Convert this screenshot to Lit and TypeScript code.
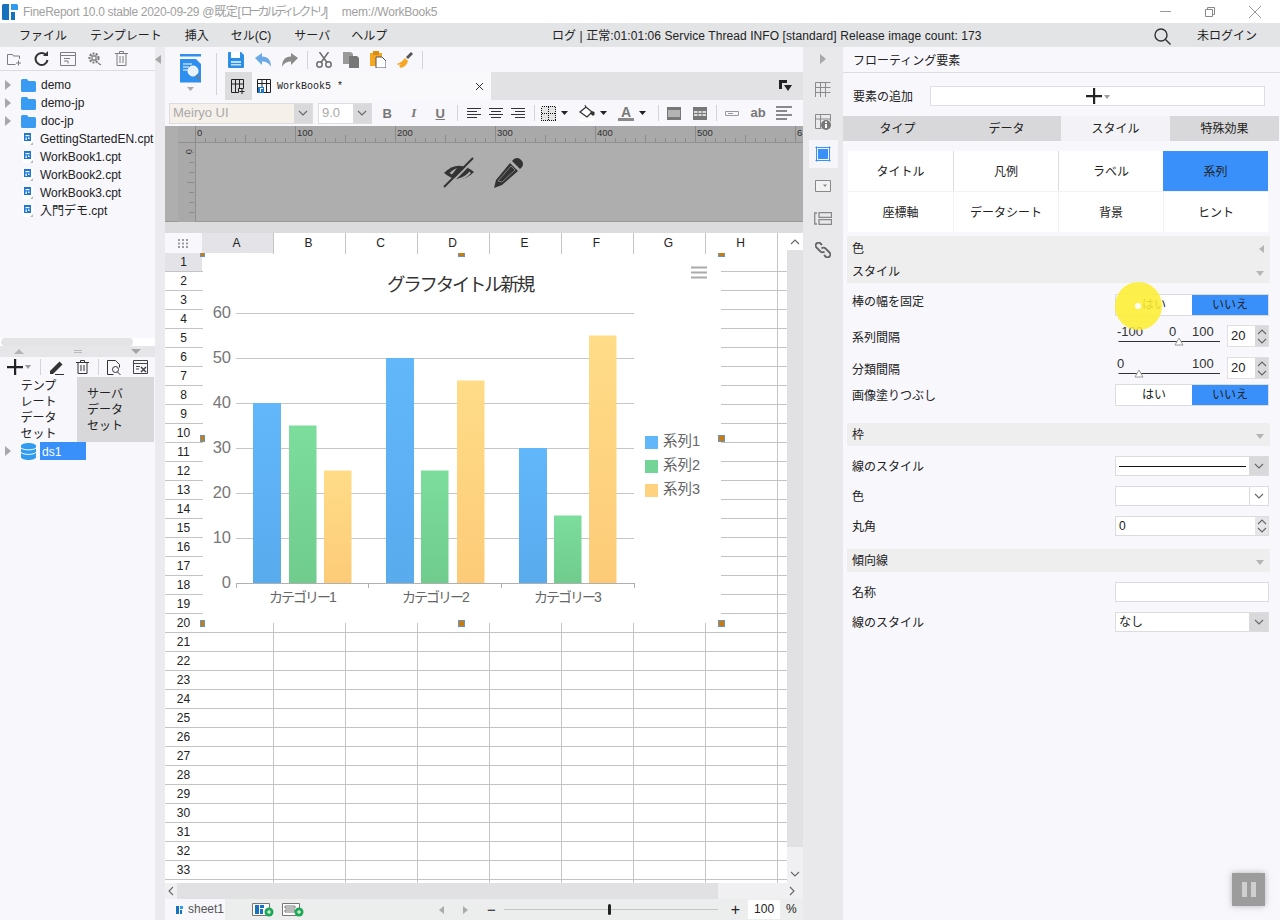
import { LitElement, html, svg, css } from 'lit';
import { customElement } from 'lit/decorators.js';

const caret = html`<svg class="caret" width="7" height="4" viewBox="0 0 7 4"><path d="M0 0h7L3.500 4z" fill="#222"/></svg>`;
const chev = html`<svg width="10" height="6" viewBox="0 0 10 6"><path d="M1 1l4 4 4-4" fill="none" stroke="#666" stroke-width="1.100"/></svg>`;
const chevUp = html`<svg width="10" height="6" viewBox="0 0 10 6"><path d="M1 5l4-4 4 4" fill="none" stroke="#666" stroke-width="1.100"/></svg>`;
const arrowR = html`<svg class="arrow" width="6" height="10" viewBox="0 0 6 10"><path d="M0 0l6 5-6 5z" fill="#a8a8aa"/></svg>`;

const folder = html`<svg width="15" height="13" viewBox="0 0 15 13"><path d="M0 1.500Q0 0 1.500 0H6l1.500 2H13.500Q15 2 15 3.500V11.500Q15 13 13.500 13H1.500Q0 13 0 11.500z" fill="#3a9bf2"/></svg>`;
const fileIcon = html`<svg width="12" height="14" viewBox="0 0 12 14"><path d="M1 1h10v12H1z" fill="#fff"/><path d="M2 1h7v8H2z" fill="#1e78d2"/><path d="M3.500 3h4v1.200h-4zM3.500 5.500h1.300V8H3.500zM6 5.500h1.500V7H6z" fill="#fff"/><path d="M8 13l3-3v3z" fill="#bbb"/></svg>`;
const db = html`<svg width="15" height="17" viewBox="0 0 15 17"><path d="M0 3c0-4 15-4 15 0v11c0 4-15 4-15 0z" fill="#2f9cf0"/><path d="M0 5c3 2.500 12 2.500 15 0M0 9.500c3 2.500 12 2.500 15 0" stroke="#fff" fill="none"/></svg>`;

const stroke = '#7d7d7d';
const treeTools = [
  html`<svg width="16" height="14" viewBox="0 0 16 14" fill="none" stroke="${stroke}"><path d="M.5 2.500h5l1 1.500h6v3M.5 2.500v10h8M11.500 8.500v5M9 11h5"/></svg>`,
  html`<svg width="15" height="15" viewBox="0 0 15 15" fill="none"><path d="M12.500 4.500A6 6 0 1 0 13.500 9" stroke="#333" stroke-width="2"/><path d="M9 5h5V0z" fill="#333"/></svg>`,
  html`<svg width="16" height="14" viewBox="0 0 16 14" fill="none" stroke="${stroke}"><path d="M.5.5h15v13H.5zM.5 3.500h15M4 6.500h6M4 9h4v2.500"/></svg>`,
  html`<svg width="16" height="15" viewBox="0 0 16 15" fill="none" stroke="${stroke}" stroke-width="1.300"><circle cx="7" cy="7" r="4.500" stroke-dasharray="2 1.200" stroke-width="2.200"/><path d="M5 5h4v4H5zM11 12l3 2"/></svg>`,
  html`<svg width="13" height="15" viewBox="0 0 13 15" fill="none" stroke="${stroke}"><path d="M0 2.500h13M4.500 2.500V.5h4v2M2 2.500v12h9v-12M5 5v7M8 5v7"/></svg>`,
];

const dsTools = {
  plus: html`<svg width="16" height="16" viewBox="0 0 16 16"><path d="M0 7h16v2.200H0zM7 0h2.200v16H7z" fill="#222"/></svg>`,
  pen: html`<svg width="15" height="15" viewBox="0 0 15 15"><path d="M1 11L10.500 1.500l3 3L4 14H1z" fill="#333"/><path d="M6 14.500h9" stroke="#333"/></svg>`,
  trash: html`<svg width="13" height="14" viewBox="0 0 13 14" fill="none" stroke="#333"><path d="M0 2.500h13M4.500 2.500V.5h4v2M2 2.500v11h9v-11M5 5v6M8 5v6"/></svg>`,
  search: html`<svg width="14" height="15" viewBox="0 0 14 15" fill="none" stroke="#333"><path d="M.5.5h8l4 4v3M.5.5v14h6"/><circle cx="8.500" cy="9.500" r="3"/><path d="M10.500 12l3 3"/></svg>`,
  edit: html`<svg width="15" height="14" viewBox="0 0 15 14" fill="none" stroke="#444"><path d="M.5.5h14v13H.5zM.5 3.500h14M3 6.500h4M3 9h3"/><path d="M8 12l5-5M8 7l5 5" stroke-width="1.500"/></svg>`,
};

const rowOne = [
  html`<svg width="16" height="16" viewBox="0 0 16 16"><path d="M1 0h12l3 3v12a1 1 0 0 1-1 1H1a1 1 0 0 1-1-1V1a1 1 0 0 1 1-1z" fill="#2e8fe8"/><path d="M3 0h9v6H3z" fill="#fff"/><path d="M3 9h10v2H3zM3 12h10v1.500H3z" fill="#bfe0fb"/></svg>`,
  html`<svg width="16" height="14" viewBox="0 0 16 14"><path d="M0 5l7-5v3.500c6 0 9 4 9 10.500-2-4-5-5.500-9-5.500V12z" fill="#6aa9e6"/></svg>`,
  html`<svg width="16" height="14" viewBox="0 0 16 14"><path d="M16 5L9 0v3.500C3 3.500 0 7.500 0 14c2-4 5-5.500 9-5.500V12z" fill="#8a8a8a"/></svg>`,
  html`<svg width="16" height="16" viewBox="0 0 16 16" fill="none" stroke="#6e6e6e" stroke-width="1.500"><circle cx="3.500" cy="12.500" r="2.700"/><circle cx="12.500" cy="12.500" r="2.700"/><path d="M5 10.500L12.500 0M11 10.500L3.500 0"/></svg>`,
  html`<svg width="16" height="16" viewBox="0 0 16 16"><path d="M0 0h8l2 2v10H0z" fill="#9a9a9a"/><path d="M6 4h8l2 2v10H6z" fill="#777"/></svg>`,
  html`<svg width="16" height="17" viewBox="0 0 16 17"><path d="M0 2h12v13H0z" fill="#f5a623"/><path d="M3 0h6v4H3z" fill="#d98c10"/><path d="M6 6h6l4 4v7H6z" fill="#fff" stroke="#555"/></svg>`,
  html`<svg width="16" height="16" viewBox="0 0 16 16"><path d="M8 6l3 3c-1 4-4 6-7 7-1-1-1-1-2-2l2-2-3 1-1-1c3-1 6-3 8-6z" fill="#f5a623"/><path d="M9 5l5-5 2 2-5 5z" fill="#555"/></svg>`,
];

const gridPlus = html`<svg width="15" height="15" viewBox="0 0 15 15" fill="none" stroke="#222"><path d="M.5.5h12v9h-5v4h-7zM.5 5h12M4.500.5v13M8.500.5v9M11 10v5M8.500 12.500h5"/></svg>`;
const gridDoc = html`<svg width="14" height="14" viewBox="0 0 14 14"><path d="M.5.5h13v13H.5zM.5 4.500h13M5 .5v13M9.500.5v13" fill="none" stroke="#222"/><path d="M1 8h6v6H1z" fill="#1e78d2"/><path d="M3 9h3v1H4v3H3z" fill="#fff"/></svg>`;

const lines = (d: string) => html`<svg width="14" height="12" viewBox="0 0 14 12"><path d="${d}" stroke="#333" fill="none"/></svg>`;

const fmtBorder = html`<svg width="15" height="15" viewBox="0 0 15 15" shape-rendering="crispEdges"><path d="M0 0h15v15H0z" fill="#e4e4e4"/><path d="M.5.5h14v14H.5zM7.500.5v14M.5 7.500h14" fill="none" stroke="#111" stroke-dasharray="1 1"/></svg>`;
const fmtFill = html`<svg width="16" height="16" viewBox="0 0 16 16"><path d="M0 13h15v3H0z" fill="#fff"/><path d="M1 7l6-5 6 5-5 5z" fill="#fff" stroke="#333" stroke-width="1.300"/><path d="M6 0l1 3M12 7l3 0 0 3-2 0z" stroke="#333" fill="#333"/></svg>`;
const fmtColor = html`<span class="font-a">A</span>`;
const cellMerge = html`<svg width="14" height="13" viewBox="0 0 14 13"><path d="M0 0h14v13H0z" fill="#777"/><path d="M1 3h12v7H1z" fill="#b3b3b3"/></svg>`;
const cellSplit = html`<svg width="14" height="13" viewBox="0 0 14 13"><path d="M0 0h14v13H0z" fill="#777"/><path d="M1 4h3.500v2H1zM5.500 4h3v2h-3zM9.500 4H13v2H9.500zM1 7h3.500v2H1zM5.500 7h3v2h-3zM9.500 7H13v2H9.500z" fill="#ddd"/></svg>`;
const fmtInput = html`<svg width="14" height="5" viewBox="0 0 14 5"><path d="M.5.5h13v4H.5zM3 2.500h5" fill="none" stroke="#999"/></svg>`;
const fmtLines = html`<svg width="16" height="14" viewBox="0 0 16 14"><path d="M0 1h16M0 5h11M0 9h16M0 13h11" stroke="#666" stroke-width="1.600" fill="none"/></svg>`;

const sideIcons = [
  html`<svg width="16" height="16" viewBox="0 0 16 16" fill="none" stroke="#8a8a8a"><path d="M.5 15V.5h15M.5 5.500h15M.5 10.500h15M5.500 1v14M10.500 1v14"/></svg>`,
  html`<svg width="16" height="16" viewBox="0 0 16 16"><path d="M.5.500h15v7M.5.500v14h6M.5 5h15M5.500.5v14" fill="none" stroke="#8a8a8a"/><circle cx="11" cy="11" r="5" fill="#777"/><path d="M10 7.500h2v1.500h-2zM10 10h2v4h-2z" fill="#fff"/></svg>`,
  html`<svg width="16" height="16" viewBox="0 0 16 16"><path d="M.5 1.500h15M.5 14.500h15M1.500.5v15M14.500.5v15" stroke="#3a90fb"/><path d="M3 3h10v10H3z" fill="#3a90fb"/></svg>`,
  html`<svg width="16" height="12" viewBox="0 0 16 12"><path d="M.5.500h15v11H.5z" fill="#f2f2f2" stroke="#888"/><path d="M8 4.500h4L10 7z" fill="#888"/></svg>`,
  html`<svg width="18" height="13" viewBox="0 0 18 13" fill="none" stroke="#888" stroke-width="1.300"><path d="M3 1H.7v11H3M5 .7h12.500v4.600H5zM5 7.700h12.500v4.600H5z"/></svg>`,
  html`<svg width="16" height="16" viewBox="0 0 16 16" fill="none" stroke="#666" stroke-width="1.800"><path d="M7 3L5.500 1.500a2.800 2.800 0 0 0-4 4l4 4a2.800 2.800 0 0 0 4 0M9 13l1.500 1.500a2.800 2.800 0 0 0 4-4l-4-4a2.800 2.800 0 0 0-4 0"/></svg>`,
];

const series = [
  { name: '系列1', color: '#62b7fb', shade: '#58abed', swatch: '#62b7fb', values: [40, 50, 30], x: [253, 386, 519] },
  { name: '系列2', color: '#7cdd9d', shade: '#6fcc8d', swatch: '#74d497', values: [35, 25, 15], x: [289, 421, 554] },
  { name: '系列3', color: '#ffdc88', shade: '#fdcb78', swatch: '#ffd27f', values: [25, 45, 55], x: [324, 457, 589] },
];

const yOf = (v: number) => 583 - v * 4.5;

@customElement('app-root')
export class AppRoot extends LitElement {
  static styles = css`
    :host {
      display: block;
      position: relative;
      width: 1280px;
      height: 920px;
      overflow: hidden;
      background: #f7f7fc;
      color: #222;
      font: 12px/1.2 "Liberation Sans", "Noto Sans CJK JP", sans-serif;
    }
    svg { display: block; flex: none; }
    .title {
      height: 23px;
      background: #fff;
      display: flex;
      align-items: center;
      padding-left: 2px;
      color: #a0a0a0;
      white-space: pre;
    }
    .title .txt { margin-left: 5px; padding-top: 2px; letter-spacing: -.3px; }
    .title .kana { letter-spacing: -3.500px; }
    .title .mem { margin-left: 14px; letter-spacing: -.2px; }
    .win { margin-left: auto; display: flex; align-items: center; padding-right: 19px; gap: 34px; }
    .menu {
      height: 24px;
      background: #e3e4e6;
      display: flex;
      align-items: center;
      padding: 2px 0 0 19px;
      box-sizing: border-box;
      gap: 23px;
      color: #222;
      white-space: nowrap;
    }
    .menu > span:nth-child(4) { margin-left: -1px; }
    .menu > span:nth-child(6) { margin-left: -2px; }
    .log { position: absolute; left: 552px; letter-spacing: .08px; }
    .menu .right { margin-left: auto; display: flex; align-items: center; gap: 26px; padding-right: 23px; }
    .main { display: flex; height: 873px; }

    .left { width: 155px; display: flex; flex-direction: column; }
    .tree-tools { height: 23px; display: flex; align-items: center; border-bottom: 1px solid #dcdcdf; }
    .tree-tools div { width: 26.500px; display: flex; justify-content: center; }
    .tree-tools div:first-child { margin-left: 2px; }
    .tree { height: 267px; padding-top: 5px; box-sizing: border-box; }
    .node { height: 18px; display: flex; align-items: center; white-space: nowrap; }
    .arrow { margin-left: 5px; margin-right: 10px; }
    .node .file { margin-left: 22px; margin-right: 6px; }
    .node .fold { margin-right: 5px; }
    .hscroll-small { height: 8px; background: #fff; }
    .hscroll-small div { width: 132px; height: 8px; background: #e4e4e6; border-radius: 4px; margin-left: 1px; }
    .divider { height: 11px; background: #e6e6e8; display: flex; align-items: center; justify-content: space-between; padding: 0 14px; }
    .divider i { width: 8px; height: 3px; border-top: 1px solid #bbb; border-bottom: 1px solid #bbb; box-sizing: border-box; }
    .ds-tools { height: 20px; display: flex; align-items: center; padding-left: 7px; }
    .ds-tools .sep { height: 16px; margin: 0 8px 0 9px; }
    .mini-caret { width: 0; height: 0; border: 3px solid transparent; border-top: 4px solid #999; margin: 3px 0 0 2px; }
    .ds-tools .gap { margin-right: 12px; }
    .sep { width: 1px; height: 20px; background: #d4d4d6; flex: none; }
    .ds-tabs { display: flex; height: 65px; line-height: 16px; }
    .ds-tabs div { width: 77px; box-sizing: border-box; }
    .ds-tabs .on { text-align: center; padding-top: 1px; background: #f7f7fc; }
    .ds-tabs .off { background: #d8d8da; padding: 9px 0 0 10px; }
    .ds1 .name { margin-left: 4px; width: 46px; height: 18px; background: #3a90fb; color: #fff; padding: 1px 0 0 2px; line-height: 18px; box-sizing: border-box; }

    .collapse { width: 10px; background: #ebebef; padding-top: 8px; box-sizing: border-box; }

    .center { width: 638px; display: flex; flex-direction: column; }
    .tools-top { height: 53px; display: flex; }
    .big { width: 51px; flex: none; display: flex; flex-direction: column; align-items: center; padding-top: 7px; box-sizing: border-box; gap: 4px; }
    .big-sep { height: 42px; margin: 6px 8px 0 0; }
    .tools-right { flex: 1; display: flex; flex-direction: column; }
    .row1 { height: 25px; display: flex; align-items: center; }
    .slot { display: flex; align-items: center; justify-content: center; flex: none; }
    .s27 { width: 27px; }
    .s22 { width: 22px; }
    .s26 { width: 26.500px; }
    .s30 { width: 30px; }
    .s32 { width: 32px; }
    .row1 .sep { margin: 0 2.500px 0 3.500px; height: 18px; }
    .row1 .slot:first-child { margin-left: -2.500px; }
    .tabs { height: 28px; background: #e2e2e4; display: flex; align-items: stretch; }
    .tab-new { width: 27px; background: #dcdcde; display: flex; align-items: center; justify-content: center; }
    .tab { width: 239px; background: #f9f9fc; display: flex; align-items: center; padding-left: 5px; box-sizing: border-box; font: 10px "Liberation Mono", monospace; }
    .tab .nm { margin-left: 6px; }
    .tab .x { margin-left: auto; margin-right: 7px; }
    .tabs .end { margin-left: auto; margin-right: 11px; align-self: center; }
    .fmt { height: 26px; display: flex; align-items: center; padding-left: 4px; background: #f7f7fc; }
    .select { display: flex; height: 21px; background: #f5f0ea; border: 1px solid #ddd; box-sizing: border-box; color: #a9a9a9; align-items: center; }
    .select .val { padding-left: 3px; flex: 1; font-size: 13px; }
    .select .dd { width: 18px; align-self: stretch; background: #d9d9db; display: flex; align-items: center; justify-content: center; }
    .font-sel { width: 144px; }
    .size-sel { width: 54px; margin-left: 5px; background: #fff; }
    .ml2 { margin-left: 2px; }
    .ml6 { margin-left: 6.500px; }
    .ml7 { margin-left: 7px; }
    .fmt b, .fmt em, .fmt u { font: bold 13px "Liberation Sans", sans-serif; color: #777; }
    .fmt em { font: italic bold 13px "Liberation Serif", serif; }
    .fmt .sep { height: 16px; }
    .fmt .a { margin: 0 5px 0 3px; }
    .fmt .b { margin: 0 4px 0 5px; }
    .fmt .c { margin-left: 10px; }
    .fmt .d { margin-left: 5px; }
    .caret { margin-left: 5px; }
    .font-a { display: block; width: 16px; text-align: center; font: bold 14px/12px "Liberation Sans", sans-serif; color: #777; border-bottom: 3px solid #888; }
    .ab { font-size: 13px; font-weight: bold; color: #777; }

    .design { height: 96px; position: relative; background: #aeaeae; border-bottom: 1px solid #9a9a9a; box-sizing: border-box; display: flex; gap: 19px; padding: 31px 0 0 278px; }
    .design .rulers { position: absolute; left: 0; top: 0; }
    .design .tool { position: relative; }
    .gap-band { height: 11px; background: #dcdcde; }

    .sheet { height: 650px; display: flex; }
    .grid { width: 622px; height: 650px; position: relative; overflow: hidden; background: #fff; }
    .g-row { display: flex; height: 19px; }
    .g-row.g-head { height: 20px; }
    .corner { width: 37px; background: #f7f7fc; display: flex; align-items: center; justify-content: center; flex: none; }
    .col { width: 72px; flex: none; display: flex; align-items: center; justify-content: center; box-sizing: border-box; border-right: 1px solid #c4c4c4; padding: 1px 2px 0 0; color: #222; background: #fff; }
    .col.on { background: #e4e4e8; }
    .rh { width: 37px; flex: none; box-sizing: border-box; border-bottom: 1px solid #c4c4c4; display: flex; align-items: center; justify-content: center; color: #222; }
    .rh.on { background: #e4e4e8; }
    .cell { width: 72px; flex: none; box-sizing: border-box; border-right: 1px solid #c4c4c4; border-bottom: 1px solid #c4c4c4; }
    .cell.tail { width: 9px; border-right: 0; }
    .chart { position: absolute; left: 38px; top: 21px; background: #fff; }
    .handle { position: absolute; width: 7px; height: 7px; background: #c77d0e; border: 1px solid #6a93c0; box-sizing: border-box; }
    .handle.edge-l { width: 5px; }
    .handle.edge-t { height: 4px; border-top: 0; }
    .vscroll { width: 16px; background: #f0f0f3; display: flex; flex-direction: column; align-items: center; }
    .vscroll .up { width: 16px; height: 17px; background: #fff; display: flex; align-items: center; justify-content: center; }
    .vscroll .thumb { width: 16px; height: 597px; background: #e1e1e3; }
    .vscroll .down { margin-top: 24px; }
    .hbar { height: 16px; display: flex; align-items: center; background: #f0f0f3; }
    .hbar .thumb { width: 541px; height: 16px; background: #e1e1e3; margin: 0 69px 0 0; }
    .hbar .lft { width: 12px; display: flex; justify-content: center; }
    .rot-l { transform: rotate(90deg); }
    .rot-r { transform: rotate(-90deg); }
    .foot { height: 21px; background: #eceded; display: flex; align-items: center; }
    .sheet-tab { width: 60px; height: 21px; background: #f7f7fc; display: flex; align-items: center; padding-left: 11px; box-sizing: border-box; gap: 5px; color: #555; }
    .foot .adds { display: flex; gap: 8px; margin-left: 27px; }
    .nav { margin-left: 135px; display: flex; gap: 19px; }
    .zoom-line { width: 214px; height: 1px; background: #c4c4c4; position: relative; margin-left: 8px; }
    .zoom-thumb { position: absolute; left: 104px; top: -5px; width: 3px; height: 11px; background: #222; border-radius: 2px; }
    .minus { margin-left: 19px; font-size: 15px; line-height: 15px; }
    .plus { margin-left: 13px; font-size: 16px; line-height: 16px; }
    .zoom-val { width: 32px; height: 19px; background: #fff; margin-left: 8px; display: flex; align-items: center; justify-content: center; }
    .pct { margin-left: 6px; }

    .strip { width: 40px; background: #e9e9ec; display: flex; flex-direction: column; align-items: center; padding-top: 7px; box-sizing: border-box; }
    .strip .ic { width: 29px; height: 28px; display: flex; align-items: center; justify-content: center; margin-top: 4px; }
    .strip .ic.on { background: #f6f6fa; }
    .strip .first { margin-bottom: 8px; }

    .panel { width: 437px; display: flex; flex-direction: column; }
    .p-title { height: 26px; border-bottom: 1px solid #dcdcdf; box-sizing: border-box; display: flex; align-items: center; padding: 3px 0 0 10px; }
    .p-add { height: 43px; box-sizing: border-box; padding: 13px 15px 10px 10px; display: flex; align-items: center; }
    .p-add .lb { padding-top: 2px; }
    .p-add .box { margin-left: 17px; flex: 1; height: 20px; background: #fff; border: 1px solid #dfdfe2; box-sizing: border-box; display: flex; align-items: center; justify-content: center; }
    .mc2 { border: 3px solid transparent; border-top: 4px solid #999; margin: 4px 0 0 2px; }
    .p-tabs { height: 25px; display: flex; width: 436px; }
    .p-tabs div { flex: 1; display: flex; align-items: center; justify-content: center; padding-top: 2px; box-sizing: border-box; background: #d8d8da; }
    .p-tabs .on { background: #f3f3f7; }
    .sub { margin: 10px 0 0 5px; width: 420px; display: grid; grid-template-columns: repeat(4, 105px); grid-template-rows: 40px 41px; }
    .sub div { background: #fff; display: flex; align-items: center; justify-content: center; box-sizing: border-box; padding-top: 2px; border-left: 1px solid #ddd; }
    .sub div:nth-child(4n+1) { border-left: 0; }
    .sub div:nth-child(n+5) { border-left-color: #f2f2f2; border-top: 1px solid #f2f2f2; }
    .sub .on { background: #3a90fb; color: #222; border-left: 0; }
    .sec { margin: 0 10px 0 4px; background: #eeeeee; padding: 2px 6px 0 5px; box-sizing: border-box; display: flex; align-items: center; justify-content: space-between; height: 23px; }
    .sec.tall { height: 24px; margin-top: 4px; }
    .down-tri { width: 0; height: 0; border: 4px solid transparent; border-top: 5px solid #b5b5b8; margin-top: 5px; }
    .left-tri { width: 0; height: 0; border: 4px solid transparent; border-right: 5px solid #b5b5b8; border-left: 0; }
    .f-row { display: flex; align-items: center; justify-content: space-between; height: 20px; margin-top: 10px; padding: 0 11px 0 9px; }
    .lb { padding-top: 2px; }
    .h22 { height: 22px; }
    .mt11 { margin-top: 11px; }
    .mt4 { margin-top: 4px; }
    .mt17 { margin-top: 17px; }
    .mt13 { margin-top: 13px; }
    .lift { margin-top: -6px; }
    .toggle { width: 154px; height: 22px; display: flex; border: 1px solid #dcdcdf; box-sizing: border-box; background: #fff; }
    .toggle div { flex: 1; display: flex; align-items: center; justify-content: center; padding-top: 1px; }
    .toggle .yes { background: #3a90fb; }
    .slider-wrap { width: 154px; display: flex; justify-content: space-between; }
    .num { width: 42px; height: 22px; background: #fff; border: 1px solid #e0e0e3; box-sizing: border-box; display: flex; }
    .num .v { flex: 1; padding-left: 3px; display: flex; align-items: center; font-size: 13px; }
    .spin { width: 13px; background: #d9d9db; display: flex; flex-direction: column; align-items: center; justify-content: center; gap: 3px; }
    .spin.wide { gap: 2px; background: #e6e6e8; align-self: stretch; }
    .field { width: 154px; height: 20px; background: #fff; border: 1px solid #dcdcdf; box-sizing: border-box; display: flex; align-items: center; }
    .field .body { flex: 1; padding: 0 3px; display: flex; align-items: center; }
    .stroke-line { flex: 1; height: 1px; background: #111; margin: 0 3px; }
    .dd { width: 19px; align-self: stretch; display: flex; align-items: center; justify-content: center; background: #d9d9db; }
    .dd.plain { background: #fff; border-left: 1px solid #dcdcdf; box-sizing: border-box; }

    .spot { position: absolute; left: 1115px; top: 282px; width: 47px; height: 48px; border-radius: 50%; background: rgba(253, 238, 50, .88); display: flex; align-items: center; justify-content: center; }
    .spot i { width: 6px; height: 6px; background: #fff; border-radius: 50%; margin-right: 2px; }
    .pause { position: absolute; left: 1232px; top: 873px; width: 33px; height: 33px; background: #9c9c9c; box-shadow: 0 0 6px rgba(120,120,120,.5); display: flex; align-items: center; justify-content: center; gap: 4px; }
    .pause i { width: 5px; height: 15px; background: #cfcfcf; }
  `;

  private tree() {
    const folders = ['demo', 'demo-jp', 'doc-jp'];
    const files = ['GettingStartedEN.cpt', 'WorkBook1.cpt', 'WorkBook2.cpt', 'WorkBook3.cpt', '入門デモ.cpt'];
    return html`
      ${folders.map((f) => html`<div class="node">${arrowR}<span class="fold">${folder}</span>${f}</div>`)}
      ${files.map((f) => html`<div class="node"><span class="file">${fileIcon}</span>${f}</div>`)}
    `;
  }

  private rulers() {
    const ticks = [];
    for (let x = 30; x <= 638; x += 10) {
      const major = (x - 30) % 100 === 0;
      const mid = (x - 30) % 50 === 0;
      const h = major ? 17 : mid ? 7 : 4;
      ticks.push(svg`<path d="M${x + 0.5} 16V${16 - h}" stroke="#8b8b8b"/>`);
      if (major) {
        // the 600 label runs off the canvas, only its first digit shows
        const label = x - 30 === 600 ? '6' : `${x - 30}`;
        ticks.push(svg`<text x="${x + 2}" y="10" font-size="9.500" fill="#333" font-family="Liberation Sans">${label}</text>`);
      }
    }
    for (let y = 26; y < 96; y += 10) {
      ticks.push(svg`<path d="M${y % 50 === 6 ? 22 : 24} ${y + 0.500}H29" stroke="#8b8b8b"/>`);
    }
    return html`<svg class="rulers" width="638" height="96" viewBox="0 0 638 96">
      <path d="M13 0h625v17H13z" fill="#a9a9a9"/>
      <path d="M13 17h17v79H13z" fill="#a9a9a9"/>
      <path d="M13 16.500h625M30.500 0v96" stroke="#8f8f8f"/>
      <text x="0" y="0" font-size="9.500" fill="#333" font-family="Liberation Sans" transform="translate(21 23) rotate(90)">0</text>
      ${ticks}
    </svg>`;
  }

  private chart() {
    const levels = [0, 10, 20, 30, 40, 50, 60];
    const cats = [
      ['カテゴリー1', 302],
      ['カテゴリー2', 435],
      ['カテゴリー3', 567],
    ] as const;
    return html`<svg class="chart" width="518" height="369" viewBox="203 254 518 369" font-family="Liberation Sans, Noto Sans CJK JP, sans-serif">
      <defs>
        ${series.map((s, i) => svg`<linearGradient id="g${i}" x1="0" y1="0" x2="0" y2="1"><stop offset="0" stop-color="${s.color}"/><stop offset="1" stop-color="${s.shade}"/></linearGradient>`)}
      </defs>
      <text x="460" y="291" text-anchor="middle" font-size="18.500" letter-spacing="-2.300" fill="#333">グラフタイトル新規</text>
      <path d="M691 267.500h16M691 272.500h16M691 277.500h16" stroke="#aaa" stroke-width="2.200"/>
      ${levels.map((v) => svg`
        <path d="M236 ${yOf(v) + 0.5}H634" stroke="${v === 0 ? '#b0b0b0' : '#c6c6c6'}"/>
        <text x="231" y="${yOf(v) + 5}" text-anchor="end" font-size="16.500" fill="#777">${v}</text>`)}
      <path d="M236.500 583v5M368.500 583v5M501.500 583v5M634.500 583v5" stroke="#b0b0b0"/>
      ${series.map((s, i) => s.values.map((v, c) => svg`<rect x="${s.x[c]}" y="${yOf(v)}" width="${i === 0 ? 28 : 27.500}" height="${v * 4.5}" fill="url(#g${i})"/>`))}
      ${series.map((s, i) => svg`
        <rect x="645" y="${436 + i * 24}" width="13" height="13" fill="${s.swatch}"/>
        <text x="663" y="${446 + i * 24}" font-size="14.500" fill="#666">${s.name}</text>`)}
      ${cats.map(([t, x]) => svg`<text x="${x}" y="602" text-anchor="middle" font-size="14" letter-spacing="-2" fill="#666">${t}</text>`)}
    </svg>`;
  }

  private grid() {
    const cols = ['A', 'B', 'C', 'D', 'E', 'F', 'G', 'H'];
    const rows = Array.from({ length: 34 }, (_, i) => i + 1);
    const handles = [
      { x: 35, y: 20, cls: 'edge-l edge-t' }, { x: 293, y: 20, cls: 'edge-t' }, { x: 553, y: 20, cls: 'edge-t' },
      { x: 35, y: 202, cls: 'edge-l' }, { x: 553, y: 202, cls: '' },
      { x: 35, y: 387, cls: 'edge-l' }, { x: 293, y: 387, cls: '' }, { x: 553, y: 387, cls: '' },
    ];
    return html`<div class="grid">
      <div class="g-row g-head">
        <div class="corner"><svg width="11" height="9" viewBox="0 0 11 9"><path d="M0 0h2v2H0zM4 0h2v2H4zM8 0h2v2H8zM0 3.500h2v2H0zM4 3.500h2v2H4zM8 3.500h2v2H8zM0 7h2v2H0zM4 7h2v2H4zM8 7h2v2H8z" fill="#9c9c9c"/></svg></div>
        ${cols.map((c, i) => html`<div class="col ${i === 0 ? 'on' : ''}">${c}</div>`)}
      </div>
      ${rows.map((r) => html`<div class="g-row">
        <div class="rh ${r === 1 ? 'on' : ''}">${r < 34 ? r : ''}</div>
        ${cols.map(() => html`<div class="cell"></div>`)}
        <div class="cell tail"></div>
      </div>`)}
      ${this.chart()}
      ${handles.map((h) => html`<div class="handle ${h.cls}" style="left:${h.x}px;top:${h.y}px"></div>`)}
    </div>`;
  }

  private toggle() {
    return html`<div class="toggle"><div>はい</div><div class="yes">いいえ</div></div>`;
  }

  private num(v: string) {
    return html`<div class="num"><div class="v">${v}</div><div class="spin">${chevUp}${chev}</div></div>`;
  }

  private slider(labels: [string, number][], thumb: number) {
    return html`<svg width="106" height="24" viewBox="0 0 106 24" font-family="Liberation Sans" font-size="13" fill="#333">
      ${labels.map(([t, x]) => svg`<text x="${x}" y="11">${t}</text>`)}
      <path d="M3.500 16.500H105" stroke="#333"/>
      <path d="M${thumb} 13l4 7h-8z" fill="#fff" stroke="#999"/>
    </svg>`;
  }

  render() {
    return html`
      <div class="title">
        <svg width="16" height="16" viewBox="0 0 16 16"><path d="M0 1.500Q0 0 1.500 0H7v16H1.500Q0 16 0 14.500z" fill="#1572bd"/><path d="M9 0h5.500Q16 0 16 1.500V6H9z" fill="#2f9bef"/><path d="M9 8h4v8H9z" fill="#1572bd"/></svg>
        <div class="txt">FineReport 10.0 stable 2020-09-29 @既定[<span class="kana">ローカルディレクトリ</span>]<span class="mem">mem://WorkBook5</span></div>
        <div class="win">
          <svg width="11" height="1" viewBox="0 0 11 1"><path d="M0 .5h11" stroke="#999"/></svg>
          <svg width="10" height="10" viewBox="0 0 10 10" fill="none" stroke="#888"><path d="M.5 2.500h7v7h-7zM2.500 2.500v-2h7v7h-2"/></svg>
          <svg width="12" height="12" viewBox="0 0 12 12" stroke="#999"><path d="M0 0l12 12M12 0L0 12"/></svg>
        </div>
      </div>
      <div class="menu">
        ${['ファイル', 'テンプレート', '挿入', 'セル(C)', 'サーバ', 'ヘルプ'].map((m) => html`<span>${m}</span>`)}
        <span class="log">ログ | 正常:01:01:06 Service Thread INFO [standard] Release image count: 173</span>
        <div class="right">
          <svg width="17" height="17" viewBox="0 0 17 17" fill="none" stroke="#333" stroke-width="1.400"><circle cx="7" cy="7" r="6"/><path d="M11.500 11.500L16.500 16.500"/></svg>
          <span>未ログイン</span>
        </div>
      </div>
      <div class="main">
        <div class="left">
          <div class="tree-tools">${treeTools.map((t) => html`<div>${t}</div>`)}</div>
          <div class="tree">${this.tree()}</div>
          <div class="hscroll-small"><div></div></div>
          <div class="divider">
            <svg width="10" height="5" viewBox="0 0 10 5"><path d="M5 0l5 5H0z" fill="#b5b5b8"/></svg>
            <i></i>
            <svg width="10" height="5" viewBox="0 0 10 5"><path d="M0 0h10L5 5z" fill="#a5a5a8"/></svg>
          </div>
          <div class="ds-tools">
            ${dsTools.plus}<span class="mini-caret"></span>
            <span class="sep"></span>
            <span class="gap">${dsTools.pen}</span>
            <span>${dsTools.trash}</span>
            <span class="sep"></span>
            <span class="gap">${dsTools.search}</span>
            ${dsTools.edit}
          </div>
          <div class="ds-tabs">
            <div class="on">テンプ<br />レート<br />データ<br />セット</div>
            <div class="off">サーバ<br />データ<br />セット</div>
          </div>
          <div class="node ds1">${arrowR}${db}<span class="name">ds1</span></div>
        </div>
        <div class="collapse"><svg width="6" height="9" viewBox="0 0 6 9"><path d="M6 0v9L0 4.500z" fill="#a8a8aa"/></svg></div>
        <div class="center">
          <div class="tools-top">
            <div class="big">
              <svg width="22" height="29" viewBox="0 0 22 29"><path d="M0 0h21v2.500H0zM0 5h16l5 5v18.500H0z" fill="#2f8fee"/><path d="M3 10h9M3 13h6M3 16h5" stroke="#fff" fill="none"/><circle cx="13" cy="17" r="5" fill="#e8f2fd" stroke="#fff"/><path d="M16 21l4 4" stroke="#777" stroke-width="1.600"/></svg>
              <svg width="7" height="4" viewBox="0 0 7 4"><path d="M0 0h7L3.500 4z" fill="#aaa"/></svg>
            </div>
            <div class="sep big-sep"></div>
            <div class="tools-right">
              <div class="row1">
                ${rowOne.slice(0, 3).map((t) => html`<div class="slot s27">${t}</div>`)}
                <span class="sep"></span>
                ${rowOne.slice(3).map((t) => html`<div class="slot s27">${t}</div>`)}
                <span class="sep"></span>
              </div>
              <div class="tabs">
                <div class="tab-new">${gridPlus}</div>
                <div class="tab">
                  ${gridDoc}<span class="nm">WorkBook5 *</span>
                  <svg class="x" width="9" height="9" viewBox="0 0 9 9" stroke="#333"><path d="M1 1l7 7M8 1L1 8"/></svg>
                </div>
                <svg class="end" width="13" height="12" viewBox="0 0 13 12"><path d="M0 0h8v3H3v6H0z" fill="#222"/><path d="M5 5h8l-4 6z" fill="#222"/></svg>
              </div>
            </div>
          </div>
          <div class="fmt">
            <div class="select font-sel"><span class="val">Meiryo UI</span><span class="dd">${chev}</span></div>
            <div class="select size-sel"><span class="val">9.0</span><span class="dd">${chev}</span></div>
            <div class="slot s26 ml2"><b>B</b></div>
            <div class="slot s26"><em>I</em></div>
            <div class="slot s26"><u>U</u></div>
            <span class="sep a"></span>
            <div class="slot s22">${lines('M0 1.500h14M0 4.500h10M0 7.500h14M0 10.500h10')}</div>
            <div class="slot s22">${lines('M0 1.500h14M2 4.500h10M0 7.500h14M2 10.500h10')}</div>
            <div class="slot s22">${lines('M0 1.500h14M4 4.500h10M0 7.500h14M4 10.500h10')}</div>
            <span class="sep b"></span>
            <div class="slot s32">${fmtBorder}${caret}</div>
            <div class="slot s32 ml6">${fmtFill}${caret}</div>
            <div class="slot s32 ml7">${fmtColor}${caret}</div>
            <span class="sep c"></span>
            <div class="slot s30">${cellMerge}</div>
            <div class="slot s22">${cellSplit}</div>
            <span class="sep d"></span>
            <div class="slot s30">${fmtInput}</div>
            <div class="slot s22"><span class="ab">ab</span></div>
            <div class="slot s30">${fmtLines}</div>
          </div>
          <div class="design">
            ${this.rulers()}
            <svg class="tool" width="32" height="31" viewBox="0 0 32 31"><path d="M1 16Q15 2 31 15Q17 29 1 16z" fill="#333"/><path d="M6.500 16Q10 12.500 14 11L9 17.500z" fill="#aeaeae"/><path d="M15 23Q23 22 28 16L26.500 14.500Q22 20 15 21.500z" fill="#aeaeae"/><path d="M3 31L31 3" stroke="#aeaeae" stroke-width="2"/><path d="M1 30L30 1" stroke="#333" stroke-width="2"/></svg>
            <svg class="tool" width="30" height="31" viewBox="0 0 30 31"><path d="M20 2q3-2 6 0l2 2q2 3 0 6l-2 2-8-8z" fill="#333"/><path d="M16 6l8 8L8 28 0 31l2-8z" fill="#333"/><path d="M17 9l4 4L8 25l-4-1z" fill="#333" stroke="#aeaeae" stroke-width=".6"/></svg>
          </div>
          <div class="gap-band"></div>
          <div class="sheet">
            ${this.grid()}
            <div class="vscroll">
              <div class="up">${chevUp}</div>
              <div class="thumb"></div>
              <div class="down">${chev}</div>
            </div>
          </div>
          <div class="hbar">
            <div class="lft"><span class="rot-l">${chev}</span></div>
            <div class="thumb"></div>
            <span class="rot-r">${chev}</span>
          </div>
          <div class="foot">
            <div class="sheet-tab">
              <svg width="7" height="8" viewBox="0 0 7 8"><path d="M0 0h3v8H0z" fill="#1572bd"/><path d="M4 0h3v3H4z" fill="#2f9bef"/><path d="M4 4h2v4H4z" fill="#1572bd"/></svg>
              sheet1
            </div>
            <div class="adds">
              <svg width="22" height="14" viewBox="0 0 22 14"><path d="M.5.500h17v12H.5z" fill="#fff" stroke="#777"/><path d="M3 2h4v9H3zM8 2h4v3H8zM8 6h3v5H8z" fill="#1572bd"/><circle cx="17" cy="9" r="4.500" fill="#1fa855"/><path d="M15 9h4M17 7v4" stroke="#fff"/></svg>
              <svg width="22" height="14" viewBox="0 0 22 14"><path d="M.5.500h17v12H.5z" fill="#fff" stroke="#777"/><path d="M3 3h10v2H3zM3 7h10v2H3z" fill="none" stroke="#777"/><circle cx="17" cy="9" r="4.500" fill="#1fa855"/><path d="M15 9h4M17 7v4" stroke="#fff"/></svg>
            </div>
            <div class="nav">
              <svg width="5" height="8" viewBox="0 0 5 8"><path d="M5 0v8L0 4z" fill="#aaa"/></svg>
              <svg width="5" height="8" viewBox="0 0 5 8"><path d="M0 0v8l5-4z" fill="#aaa"/></svg>
            </div>
            <span class="minus">−</span>
            <div class="zoom-line"><div class="zoom-thumb"></div></div>
            <span class="plus">+</span>
            <div class="zoom-val">100</div>
            <span class="pct">%</span>
          </div>
        </div>
        <div class="strip">
          <div class="first"><svg width="6" height="10" viewBox="0 0 6 10"><path d="M0 0l6 5-6 5z" fill="#a8a8aa"/></svg></div>
          ${sideIcons.map((s, i) => html`<div class="ic ${i === 2 ? 'on' : ''}">${s}</div>`)}
        </div>
        <div class="panel">
          <div class="p-title">フローティング要素</div>
          <div class="p-add"><span class="lb">要素の追加</span>
            <div class="box">${dsTools.plus}<span class="mc2"></span></div>
          </div>
          <div class="p-tabs">
            <div>タイプ</div><div>データ</div><div class="on">スタイル</div><div>特殊効果</div>
          </div>
          <div class="sub">
            ${['タイトル', '凡例', 'ラベル', '系列', '座標軸', 'データシート', '背景', 'ヒント'].map(
              (t) => html`<div class="${t === '系列' ? 'on' : ''}">${t}</div>`
            )}
          </div>
          <div class="sec tall">色<span class="left-tri"></span></div>
          <div class="sec">スタイル<span class="down-tri"></span></div>
          <div class="f-row h22 mt11"><span class="lift">棒の幅を固定</span>${this.toggle()}</div>
          <div class="f-row h22"><span class="lb">系列間隔</span>
            <div class="slider-wrap">${this.slider([['-100', 2], ['0', 54], ['100', 77]], 64)}${this.num('20')}</div>
          </div>
          <div class="f-row h22"><span class="lb">分類間隔</span>
            <div class="slider-wrap">${this.slider([['0', 2], ['100', 77]], 24)}${this.num('20')}</div>
          </div>
          <div class="f-row h22 mt4"><span class="lb">画像塗りつぶし</span>${this.toggle()}</div>
          <div class="sec mt17">枠<span class="down-tri"></span></div>
          <div class="f-row"><span class="lb">線のスタイル</span>
            <div class="field"><div class="stroke-line"></div><span class="dd">${chev}</span></div>
          </div>
          <div class="f-row"><span class="lb">色</span>
            <div class="field"><div class="body"></div><span class="dd plain">${chev}</span></div>
          </div>
          <div class="f-row"><span class="lb">丸角</span>
            <div class="field"><div class="body">0</div><div class="spin wide">${chevUp}${chev}</div></div>
          </div>
          <div class="sec mt13">傾向線<span class="down-tri"></span></div>
          <div class="f-row"><span class="lb">名称</span><div class="field"></div></div>
          <div class="f-row"><span class="lb">線のスタイル</span>
            <div class="field"><div class="body">なし</div><span class="dd">${chev}</span></div>
          </div>
        </div>
      </div>
      <div class="spot"><i></i></div>
      <div class="pause"><i></i><i></i></div>
    `;
  }
}
